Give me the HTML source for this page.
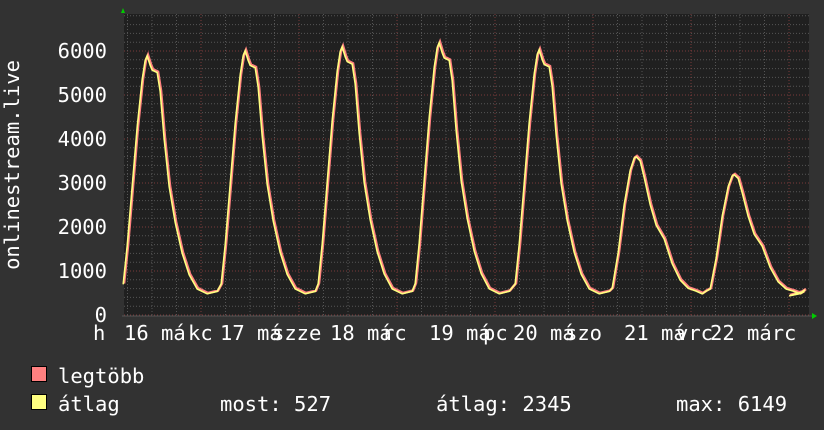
<!DOCTYPE html>
<html><head><meta charset="utf-8"><style>
html,body{margin:0;padding:0;background:#323232;width:824px;height:430px;overflow:hidden}
svg{display:block}
text{font-family:"DejaVu Sans Mono","Liberation Mono",monospace;fill:#fff;font-size:20.5px}
</style></head><body>
<svg width="824" height="430" xmlns="http://www.w3.org/2000/svg">
<rect x="0" y="0" width="824" height="430" fill="#323232"/>
<rect x="124" y="14" width="685" height="302" fill="#202020"/>
<g id="grid"></g>
<path id="c1" d="" fill="none" stroke="#ff8080" stroke-width="2.6"/>
<path id="c2" d="" fill="none" stroke="#ffff80" stroke-width="1.6" transform="translate(-0.8,0.8)"/>
<line x1="122" y1="316" x2="812" y2="316" stroke="#555" stroke-width="1"/>
<polygon points="121,13 125,13 123,8" fill="#0c0"/>
<polygon points="812,313 812,319 817,316" fill="#0c0"/>
<text x="107" y="58" text-anchor="end">6000</text>
<text x="107" y="102" text-anchor="end">5000</text>
<text x="107" y="146" text-anchor="end">4000</text>
<text x="107" y="190" text-anchor="end">3000</text>
<text x="107" y="234" text-anchor="end">2000</text>
<text x="107" y="278" text-anchor="end">1000</text>
<text x="107" y="322" text-anchor="end">0</text>
<text transform="translate(19,165) rotate(-90)" text-anchor="middle">onlinestream.live</text>
<text x="93" y="340">h</text>
<text x="124" y="340">16 má</text><text x="188" y="340">kc</text>
<text x="220" y="340">17 má</text><text x="272" y="340">szze</text>
<text x="330" y="340">18 má</text><text x="382" y="340">rc</text>
<text x="429" y="340">19 má</text><text x="483" y="340">pc</text>
<text x="513" y="340">20 má</text><text x="565" y="340">szo</text>
<text x="624" y="340">21 má</text><text x="676" y="340">vrc</text>
<text x="710" y="340">22 márc</text>
<rect x="31.5" y="366.5" width="15" height="15" fill="#ff8080" stroke="#000"/>
<rect x="31.5" y="394.5" width="15" height="15" fill="#ffff80" stroke="#000"/>
<text x="58" y="383">legtöbb</text>
<text x="58" y="411">átlag</text>
<text x="220" y="411">most: 527</text>
<text x="436" y="411">átlag: 2345</text>
<text x="676" y="411">max: 6149</text>
</svg>
<script>
var g=document.getElementById('grid'),s='';
for(var v=0;v<=6800;v+=200){var y=315-v*0.044;if(y<15)break;var maj=v%1000==0;
s+='<line x1="124" x2="809" y1="'+y+'" y2="'+y+'" stroke="'+(maj?'#7a3a3a':'#555')+'" stroke-dasharray="1,2"/>';}
for(var x=103;x<809;x+=24.5){var k=Math.round((x-103)/24.5);var maj=k%4==0;if(x<125)continue;
s+='<line y1="14" y2="316" x1="'+x+'" x2="'+x+'" stroke="'+(maj?'#7a3a3a':'#555')+'" stroke-dasharray="1,2"/>';}
g.innerHTML=s;
var peaks=[[148,55],[246,50],[343,46],[440,42],[540,49],[637,156],[735,174]];
var prof=[[-24,0.04],[-20,0.2],[-15,0.45],[-10,0.7],[-5,0.9],[-2,0.98],[0,1],[3,0.96],[5,0.94],[10,0.93],[13,0.85],[17,0.65],[22,0.45],[28,0.3],[35,0.17],[42,0.08],[50,0.02],[60,0],[70,0.01]];
var prof2=[[-24,0.04],[-18,0.3],[-12,0.65],[-6,0.9],[-2,0.99],[0,1],[4,0.97],[8,0.85],[14,0.65],[20,0.5],[28,0.4],[36,0.22],[44,0.1],[52,0.04],[60,0.02],[66,0],[70,0.02]];
var pts=[];
peaks.forEach(function(p,i){var pr=i>=5?prof2:prof;pr.forEach(function(q){var y=293-(293-p[1])*q[1];pts.push([p[0]+q[0],y]);});});
pts.push([790,295],[800,293],[806,289]);
var d='M'+pts.map(function(p){return p[0].toFixed(1)+','+p[1].toFixed(1)}).join('L');
document.getElementById('c1').setAttribute('d',d);
document.getElementById('c2').setAttribute('d',d);
</script>
</body></html>
